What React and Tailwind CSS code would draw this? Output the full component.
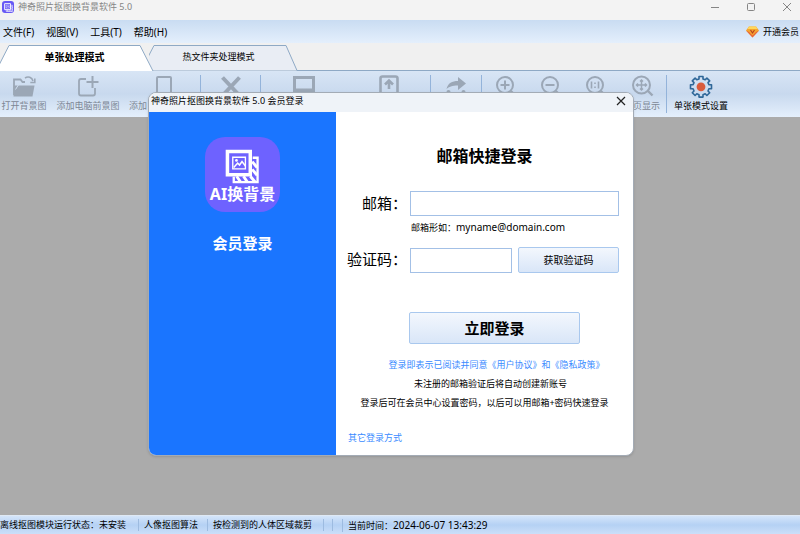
const FONT = "font-['Noto_Sans','Noto_Sans_CJK_SC',sans-serif]";

function LogoArt({ className }) {
  return (
    <svg viewBox="0 0 36 36" className={className} aria-hidden="true">
      <g fill="none" stroke="#fff">
        <path d="M2.500 2.500h23.500v24H2.500z" strokeWidth="3.600" />
        <path d="M8 8.500h13v12H8z" strokeWidth="1.400" />
        <path d="M9 19l4-4.500 2 2 2.500-3.500 3.500 4.500" strokeWidth="1.600" />
        <path d="M28.500 9h5v25H9v-5.500" strokeWidth="2.400" />
        <path d="M28 13l5 6M28 21l5 6M26 28l5 6M19 28l4 6M12 28l4 6" strokeWidth="3" />
      </g>
      <circle cx="11.800" cy="11.800" r="1.400" fill="#fff" />
    </svg>
  );
}

function Icon({ children }) {
  return (
    <svg viewBox="0 0 24 24" className="size-6 shrink-0" fill="none" stroke="currentColor" strokeWidth="2" aria-hidden="true">
      {children}
    </svg>
  );
}

const icons = {
  open: (
    <Icon>
      <path d="M2 20V4.500h6.500l2 2.500H13" strokeWidth="1.800" />
      <path d="M1.500 10.500h21L20.500 21.500H1.500z" fill="currentColor" stroke="none" />
      <path d="M3.500 14.500L7 9h16" stroke="#cfdef0" strokeWidth="1" />
      <path d="M13 3C16 1 20 2 21 6M22.800 3.500v4h-4.500" strokeWidth="1.600" />
    </Icon>
  ),
  add: (
    <Icon>
      <path d="M10 4H5Q3 4 3 6v12.500Q3 20.500 5 20.500h12q2 0 2-2V13" strokeWidth="1.800" />
      <path d="M16.500 1v12M10.500 7h12" />
    </Icon>
  ),
  phone: (
    <Icon>
      <rect x="5" y="2" width="14" height="20" rx="1" />
      <path d="M10 19h5" />
    </Icon>
  ),
  remove: (
    <Icon>
      <path d="M3.500 2.500l17 18M20.500 2.500L3.500 20.500" strokeWidth="4" />
    </Icon>
  ),
  background: (
    <Icon>
      <path d="M1 1h22v21H1zM4 4v9.500h16V4z" fill="currentColor" fillRule="evenodd" stroke="none" />
    </Icon>
  ),
  save: (
    <Icon>
      <rect x="3.500" y="1.500" width="17" height="20" rx="2" strokeWidth="2.600" />
      <path d="M12 14V7M8 9.500l4-4 4 4" strokeWidth="2.600" />
    </Icon>
  ),
  redo: (
    <Icon>
      <path d="M2.500 14C4 8 8 6 14 6V2l8 6.500-8 6.500v-4.500C8 10.500 5 12 2.500 14z" fill="currentColor" stroke="none" />
      <circle cx="4.500" cy="17" r="2" fill="currentColor" stroke="none" />
      <circle cx="19.500" cy="17" r="2" fill="currentColor" stroke="none" />
    </Icon>
  ),
  zoomIn: (
    <Icon>
      <circle cx="12" cy="10" r="8" />
      <path d="M12 5.500v9M7.500 10h9M18 16l4 4" />
    </Icon>
  ),
  zoomOut: (
    <Icon>
      <circle cx="12" cy="10" r="8" />
      <path d="M7.500 10h9M18 16l4 4" />
    </Icon>
  ),
  actual: (
    <Icon>
      <circle cx="12" cy="10" r="8" />
      <path d="M8.500 6.500v7M15.500 6.500v7M12 7.500v1.500M12 11.500V13" strokeWidth="1.600" />
      <path d="M18 16l4 4" />
    </Icon>
  ),
  fit: (
    <Icon>
      <circle cx="11.500" cy="10" r="8.500" />
      <path d="M11.500 5v10M6.500 10h10M10 6.500L11.500 5 13 6.500M10 13.500l1.500 1.500 1.500-1.500M8 8.500L6.500 10 8 11.500M15 8.500l1.500 1.500-1.500 1.500" strokeWidth="1.500" />
      <path d="M17.500 15.500l5 5" strokeWidth="2.400" />
    </Icon>
  ),
  settings: (
    <Icon>
      <path
        d="M10 1.500h4v2.400l2.200.9 1.700-1.700 2.800 2.800-1.700 1.700.9 2.200h2.600v4h-2.600l-.9 2.200 1.700 1.700-2.800 2.800-1.700-1.700-2.200.9v2.400h-4v-2.400l-2.200-.9-1.700 1.700-2.800-2.800L5 16l-.9-2.200H1.500v-4h2.600L5 7.600 3.300 5.900l2.800-2.800 1.700 1.700 2.200-.9z"
        stroke="#2f6798"
        strokeWidth="1.600"
        strokeLinejoin="round"
      />
      <circle cx="12" cy="11.800" r="4.400" fill="#d95b3c" stroke="none" />
    </Icon>
  ),
};

const tools = [
  { icon: "open", label: "打开背景图", width: "w-12" },
  { icon: "add", label: "添加电脑前景图", width: "w-20" },
  { icon: "phone", label: "添加", width: "w-[72px]", start: true },
  { divider: true },
  { icon: "remove", name: "删除", width: "w-[59px]" },
  { divider: true },
  { icon: "background", name: "更换背景", width: "w-[86px]" },
  { icon: "save", name: "保存图片", width: "w-[83px]" },
  { divider: true },
  { icon: "redo", name: "重做", width: "w-[50px]" },
  { divider: true },
  { icon: "zoomIn", name: "放大", width: "w-[46px]" },
  { icon: "zoomOut", name: "缩小", width: "w-11" },
  { icon: "actual", name: "原始大小", width: "w-[46px]" },
  { icon: "fit", label: "整页显示", width: "w-12" },
  { divider: true },
  { icon: "settings", label: "单张模式设置", width: "w-[68px]", active: true },
];

function TitleBar() {
  return (
    <header className="flex h-5 bg-[#f3f3f3] pt-px pl-0.5 text-[#858585]">
      <span className="flex size-3 items-center justify-center rounded-[3px] bg-[#6658f5]">
        <LogoArt className="size-[9px]" />
      </span>
      <h1 className="ml-1 flex-1">神奇照片抠图换背景软件 5.0</h1>
      <div className="flex gap-[26px] pt-px pr-2">
        <button aria-label="最小化" className="h-2.5">
          <svg viewBox="0 0 10 10" className="size-2.5" stroke="currentColor"><path d="M1 5.500h8" /></svg>
        </button>
        <button aria-label="最大化" className="h-2.5">
          <svg viewBox="0 0 10 10" className="size-2.5" fill="none" stroke="currentColor"><rect x="1.500" y="1.500" width="7" height="7" rx="1" /></svg>
        </button>
        <button aria-label="关闭" className="h-2.5">
          <svg viewBox="0 0 10 10" className="size-2.5" stroke="currentColor"><path d="M1 1l8 8M9 1L1 9" /></svg>
        </button>
      </div>
    </header>
  );
}

function MenuBar() {
  return (
    <nav className="flex h-[23px] items-center bg-linear-to-b from-[#c9dcf2] to-[#e4effc] pl-[3px]">
      <div className="flex flex-1 gap-3 text-[10px]">
        <button>文件(F)</button>
        <button>视图(V)</button>
        <button>工具(T)</button>
        <button>帮助(H)</button>
      </div>
      <button className="flex items-center gap-1 pr-px">
        <svg viewBox="0 0 13 12" className="h-3 w-[13px]" aria-hidden="true">
          <path d="M3 .5h7l3 4L6.500 11.500 0 4.500z" fill="#f5a52e" />
          <path d="M3 .5h7l1.500 2.500h-10z" fill="#ffd75c" />
          <path d="M0 4.500l6.500 7 6.500-7-3 1.500-3.500 3.500L3 6z" fill="#e9643a" />
          <path d="M4.500 4l2 3 2-3" fill="none" stroke="#b8401f" strokeWidth="1.200" />
        </svg>
        开通会员
      </button>
    </nav>
  );
}

function Tabs() {
  return (
    <div role="tablist" className="flex h-7 border-b border-[#8ea9c5] bg-[#f0f0f0]">
      <button role="tab" aria-selected="true" className="relative z-10 h-7 w-[149px] text-[10px] font-bold">
        <svg viewBox="0 0 154 28" className="absolute top-0 left-0 h-7 w-[154px]" aria-hidden="true">
          <path d="M-4 28L9 2.500h131L153 28z" fill="#fff" />
          <path d="M-4 28L9 2.500h131L153 28" fill="none" stroke="#8ea9c5" />
        </svg>
        <span className="relative">单张处理模式</span>
      </button>
      <button role="tab" aria-selected="false" className="relative h-7 w-[139px]">
        <svg viewBox="0 0 150 28" className="absolute top-0 left-0 h-7 w-[150px]" aria-hidden="true">
          <path d="M-2 16L5 2.500h132L148 27.500H4z" fill="#e9edf4" />
          <path d="M-2 16L5 2.500h132L148 27.500" fill="none" stroke="#8ea9c5" />
        </svg>
        <span className="relative">热文件夹处理模式</span>
      </button>
    </div>
  );
}

function Toolbar() {
  return (
    <div role="toolbar" className="flex h-[46px] bg-linear-to-b from-[#d8e5f5] via-[#c8d9ee] to-[#e4effc]">
      {tools.map((tool, i) =>
        tool.divider ? (
          <span key={i} className="my-1 w-px shrink-0 bg-[#93b3da]" />
        ) : (
          <button
            key={i}
            aria-label={tool.name}
            className={`flex shrink-0 flex-col items-center gap-px pt-1 whitespace-nowrap ${tool.width} ${tool.active ? "text-black" : "text-[#7d8794]"}`}
          >
            <span className={tool.active ? "" : "text-[#9ba7b6]"}>{icons[tool.icon]}</span>
            {tool.label && <span className={tool.start ? "self-start pl-px" : ""}>{tool.label}</span>}
          </button>
        )
      )}
    </div>
  );
}

function StatusBar() {
  return (
    <footer className="flex h-[19px] items-center border-t border-[#dfe9f5] bg-linear-to-b from-[#d4e5fa] via-[#b5d1f4] to-[#cbdff9] whitespace-nowrap">
      <span className="w-[138px]">离线抠图模块运行状态：未安装</span>
      <span className="w-[69px] border-l border-[#9dbbe0] pl-[5px]">人像抠图算法</span>
      <span className="w-[116px] border-l border-[#9dbbe0] pl-[5px]">按检测到的人体区域裁剪</span>
      <span className="h-3 w-[9px] border-l border-[#9dbbe0]" />
      <span className="h-3 w-[10px] border-l border-[#9dbbe0]" />
      <span className="border-l border-[#9dbbe0] pl-[5px]">
        当前时间：<time className="text-[10px]">2024-06-07 13:43:29</time>
      </span>
    </footer>
  );
}

function LoginDialog() {
  const field = "h-[25px] border border-[#a3c0e6] bg-white px-1 text-xs outline-none";
  const button = "rounded-[2px] border border-[#a9c8ee] bg-linear-to-b from-[#f3f7fd] to-[#d9e6f8]";
  return (
    <section
      role="dialog"
      aria-labelledby="dialog-title"
      className="absolute top-[92px] left-[148px] w-[486px] overflow-hidden rounded-lg border border-[#a3abb5] bg-white shadow-sm"
    >
      <div className="flex h-[19px] items-start justify-between bg-[#eff3f8] pt-0.5 pr-[7px] pl-0.5">
        <h2 id="dialog-title">神奇照片抠图换背景软件 5.0 会员登录</h2>
        <button aria-label="关闭登录窗口" className="mt-px h-2.5">
          <svg viewBox="0 0 10 10" className="size-2.5" stroke="#222" strokeWidth="1.200"><path d="M1 1l8 8M9 1L1 9" /></svg>
        </button>
      </div>
      <div className="flex h-[343px]">
        <aside className="flex w-[187px] shrink-0 flex-col items-center bg-[#1a75ff] pt-[25px] text-white">
          <div className="flex size-[75px] flex-col items-center rounded-[20px] bg-[#6e62ff] pt-3">
            <LogoArt className="size-[35px]" />
            <span className="text-base leading-5 font-bold">AI换背景</span>
          </div>
          <p className="mt-[19px] text-[15px] leading-6 font-bold">会员登录</p>
        </aside>
        <form className="flex flex-1 flex-col" onSubmit={(e) => e.preventDefault()}>
          <h3 className="mt-8 text-center text-base leading-6 font-bold">邮箱快捷登录</h3>
          <div className="mt-[23px] grid grid-cols-[71px_1fr] gap-x-[3px] pr-[14px]">
            <label htmlFor="email" className="text-right text-[15px] leading-[25px] whitespace-nowrap">邮箱：</label>
            <input id="email" type="email" className={field} />
            <p className="col-start-2 pt-1 pl-px leading-[14px]">
              邮箱形如：<span className="text-[10px]">myname@domain.com</span>
            </p>
            <label htmlFor="code" className="mt-3 text-right text-[15px] leading-[25px] whitespace-nowrap">验证码：</label>
            <div className="mt-3 flex items-center gap-1.5">
              <input id="code" className={`${field} w-[102px]`} />
              <button type="button" className={`${button} h-[26px] flex-1 text-[10px]`}>获取验证码</button>
            </div>
          </div>
          <button className={`${button} mt-[39px] ml-[73px] h-8 w-[171px] text-[15px] font-bold`}>立即登录</button>
          <div className="mt-[11px] text-center leading-[19px]">
            <p className="pl-6">
              <a href="#terms" className="text-[#3a8bff]">登录即表示已阅读并同意《用户协议》和《隐私政策》</a>
            </p>
            <p className="pl-3">未注册的邮箱验证后将自动创建新账号</p>
            <p>登录后可在会员中心设置密码，以后可以用邮箱+密码快速登录</p>
          </div>
          <a href="#other" className="mt-4 ml-3 self-start leading-[19px] text-[#3a8bff]">其它登录方式</a>
        </form>
      </div>
    </section>
  );
}

export default function App() {
  return (
    <div className={`relative flex min-h-screen flex-col overflow-hidden bg-[#ababab] text-[9px] leading-3 text-black ${FONT}`}>
      <TitleBar />
      <MenuBar />
      <Tabs />
      <Toolbar />
      <main className="flex-1 bg-[#ababab]" />
      <StatusBar />
      <LoginDialog />
    </div>
  );
}
